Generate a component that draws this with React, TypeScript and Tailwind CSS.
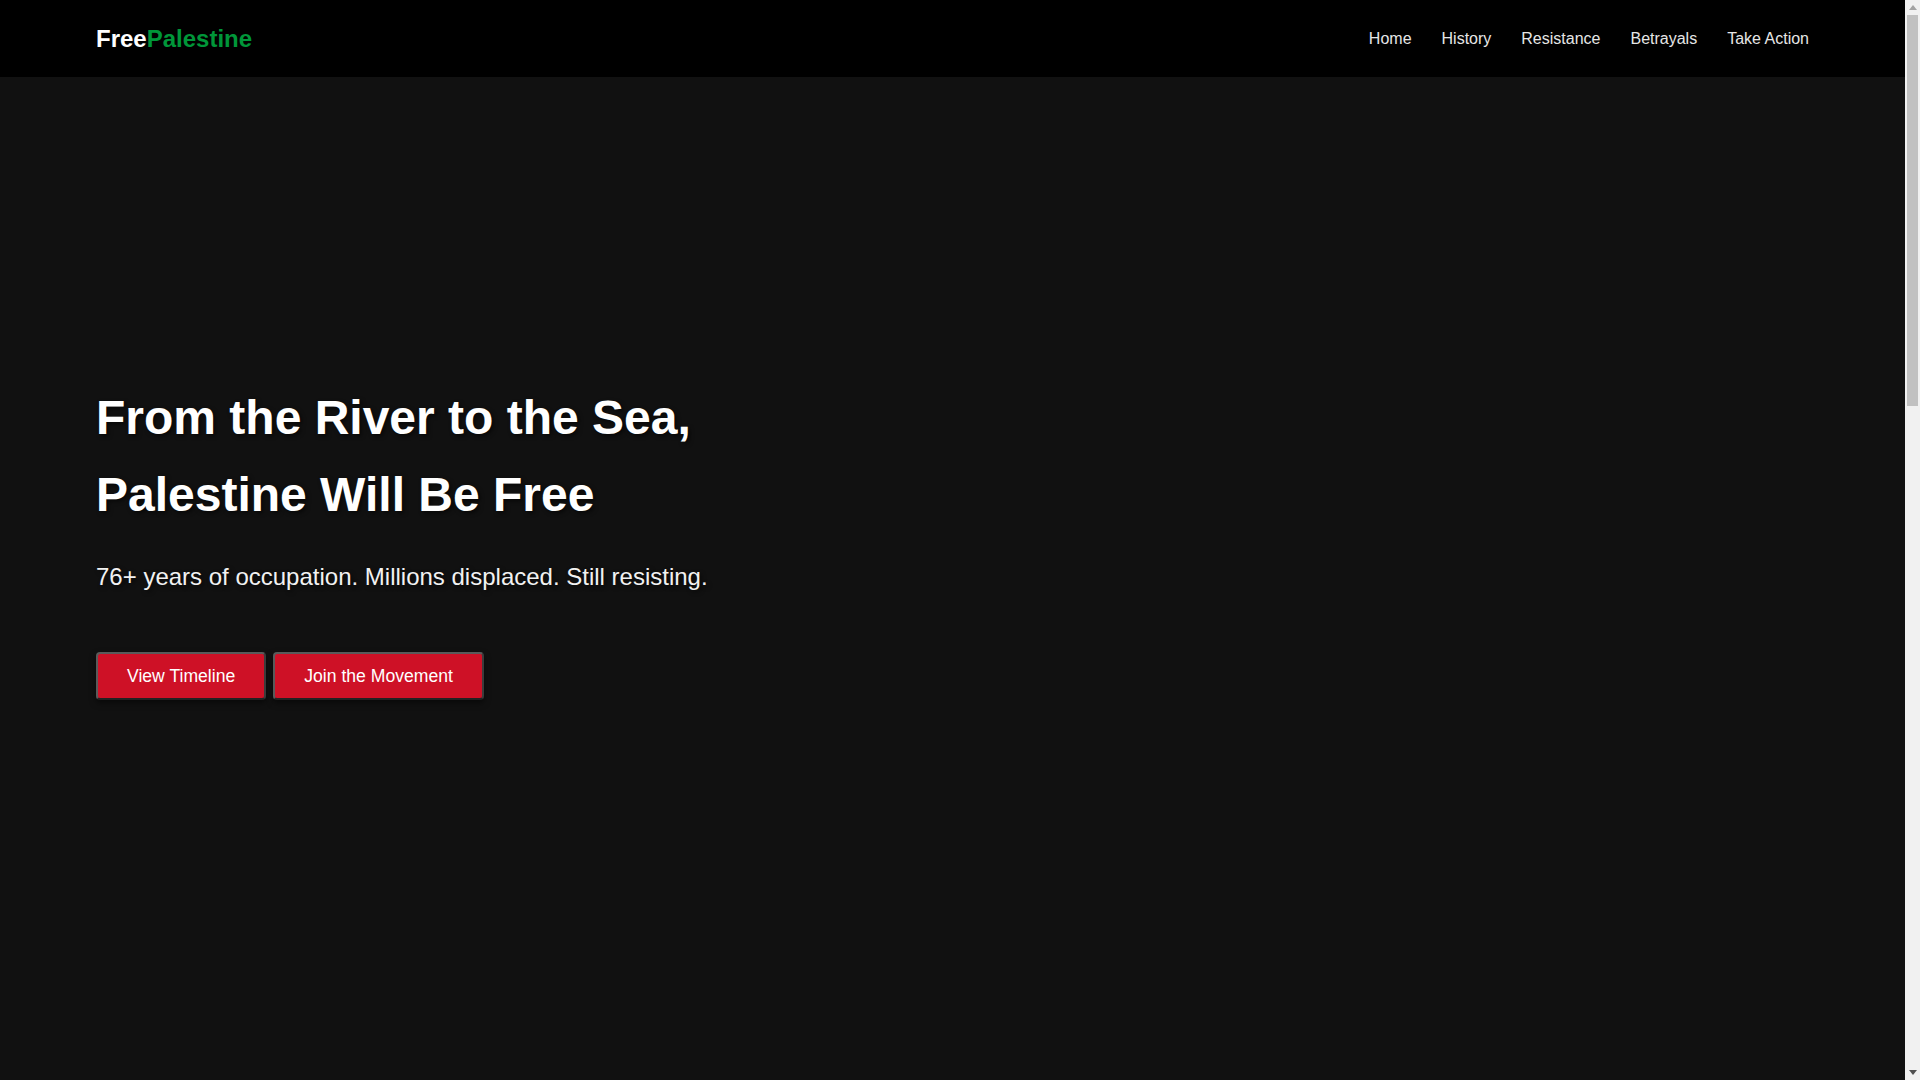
import React from "react";

const links = ["Home", "History", "Resistance", "Betrayals", "Take Action"];

function Header() {
  return (
    <header className="sticky top-0 z-10 bg-black">
      <div className="flex h-[77px] items-center justify-between px-24">
        <a href="#" className="text-2xl font-bold leading-none text-white">
          Free<span className="text-[#009639]">Palestine</span>
        </a>
        <nav className="flex items-center gap-[30px]">
          {links.map((l) => (
            <a key={l} href="#" className="text-base text-[#e6e6e6]">
              {l}
            </a>
          ))}
        </nav>
      </div>
    </header>
  );
}

// the page's scrollbar, as it shows in the screenshot
function ScrollRail() {
  return (
    <div className="flex h-screen w-[15px] shrink-0 flex-col items-center bg-[#f1f1f1]">
      <div className="flex h-[15px] items-center justify-center">
        <svg width="8" height="5" viewBox="0 0 8 5">
          <polygon points="0,5 4,0 8,5" fill="#a3a3a3" />
        </svg>
      </div>
      <div className="h-[391px] w-[11px] bg-[#c1c1c1]" />
      <div className="flex-1" />
      <div className="flex h-[15px] items-center justify-center">
        <svg width="8" height="5" viewBox="0 0 8 5">
          <polygon points="0,0 8,0 4,5" fill="#505050" />
        </svg>
      </div>
    </div>
  );
}

const btn =
  "rounded border-2 border-solid border-t-[#5a5a5a] border-l-[#5a5a5a] border-r-[#3c3c3c] border-b-[#222222] bg-[#ce1126] px-[29px] py-3 text-[17.6px] leading-[1.15] text-white shadow-[0_3px_6px_rgba(0,0,0,0.5)]";

export default function App() {
  return (
    <div className="flex h-screen bg-[#111111] font-['Liberation_Sans',Arial,sans-serif] leading-[1.6] text-white">
      <main className="h-screen flex-1 overflow-y-auto [scrollbar-width:none]">
        <Header />
        {/* hero, sits under the header */}
        <section className="-mt-[77px] flex h-screen items-center px-24">
          <div>
            <h1 className="mb-[27px] text-[48px] font-bold leading-[1.6] text-white [text-shadow:2px_2px_4px_rgba(0,0,0,0.6)]">
              From the River to the Sea,
              <br />
              Palestine Will Be Free
            </h1>
            <p className="text-2xl text-[#f2f2f2] [text-shadow:2px_2px_4px_rgba(0,0,0,0.6)]">
              76+ years of occupation. Millions displaced. Still resisting.
            </p>
            <div className="mt-[59px] flex gap-[7px]">
              <a href="#" className={btn}>
                View Timeline
              </a>
              <a href="#" className={btn}>
                Join the Movement
              </a>
            </div>
          </div>
        </section>
        {/* rest of the page, below the fold */}
        <section className="h-[1820px] bg-[#111111]" />
      </main>
      <ScrollRail />
    </div>
  );
}
